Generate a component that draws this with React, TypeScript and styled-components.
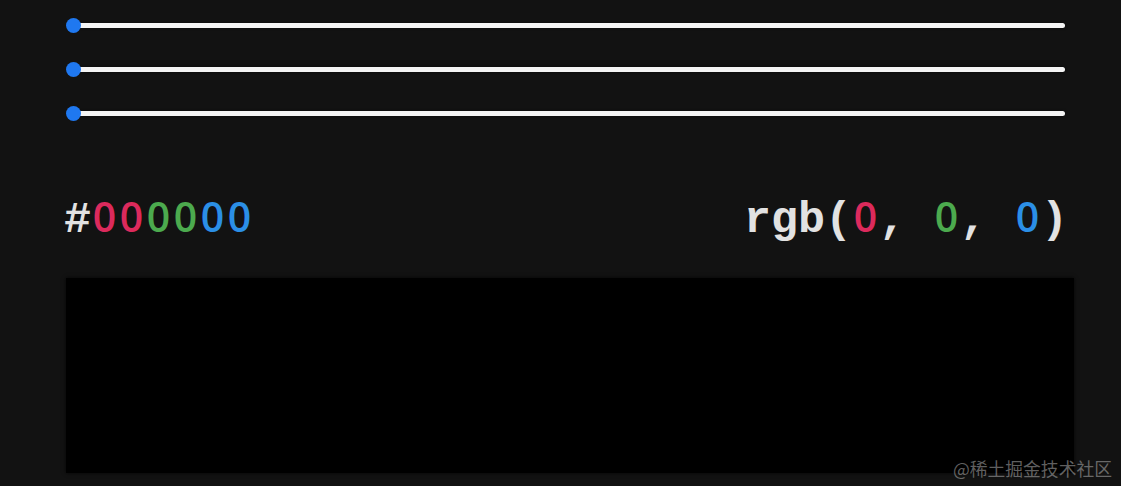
import React from "react";
import styled, { createGlobalStyle } from "styled-components";

const Global = createGlobalStyle`
  html, body { margin: 0; padding: 0; background: #121212; }
  body { font-family: "Liberation Mono", "DejaVu Sans Mono", monospace; }
`;

const Page = styled.div`
  width: 1121px;
  height: 486px;
  background: #121212;
  position: relative;
  overflow: hidden;
`;

const Panel = styled.div`
  margin-left: 66px;
  width: 1008px;
  display: flex;
  flex-direction: column;
`;

const Sliders = styled.div`
  display: flex;
  flex-direction: column;
  padding: 3px 9px 0 7px;
`;

const SliderRow = styled.div`
  height: 44px;
  display: flex;
  align-items: center;
  position: relative;
`;

const Track = styled.div`
  flex: 1;
  height: 5px;
  border-radius: 3px;
  background: #f4f4f4;
  box-shadow: 0 0 3px rgba(0, 0, 0, 0.6);
`;

const Thumb = styled.div`
  position: absolute;
  left: -7px;
  top: 50%;
  width: 15px;
  height: 15px;
  margin-top: -7.5px;
  border-radius: 50%;
  background: #1f78f0;
`;

const Values = styled.div`
  display: flex;
  justify-content: space-between;
  align-items: baseline;
  height: 60px;
  margin-top: 51px;
  padding: 0 6px 0 0;
  font-family: "Liberation Mono", monospace;
  font-weight: bold;
  font-size: 45px;
  line-height: 60px;
  color: #e2e2e2;
  margin-left: -2px;
`;

const Code = styled.span`
  white-space: pre;
`;

const Digit = styled.span<{ $c: string }>`
  display: inline-block;
  width: 27px;
  text-align: center;
  font-family: "Open Sans", "Liberation Sans", sans-serif;
  font-weight: 600;
  font-size: 41px;
  line-height: 60px;
  color: ${(p) => p.$c};
`;

const Swatch = styled.div`
  margin-top: 32px;
  height: 195px;
  background: #000;
  box-shadow: 0 0 4px rgba(0, 0, 0, 0.8);
`;

const Watermark = styled.div`
  position: absolute;
  right: 9px;
  bottom: 8px;
  font-family: "Noto Sans CJK SC", "Noto Sans", sans-serif;
  font-size: 17.8px;
  line-height: 20px;
  color: rgba(190, 190, 190, 0.5);
`;

const RED = "#dc2a5c";
const GREEN = "#4caa4e";
const BLUE = "#2b8fe6";

export default function App() {
  return (
    <>
      <Global />
      <Page>
        <Panel>
          <Sliders>
            {[0, 1, 2].map((i) => (
              <SliderRow key={i}>
                <Track />
                <Thumb />
              </SliderRow>
            ))}
          </Sliders>
          <Values>
            <Code>
              #<Digit $c={RED}>0</Digit>
              <Digit $c={RED}>0</Digit>
              <Digit $c={GREEN}>0</Digit>
              <Digit $c={GREEN}>0</Digit>
              <Digit $c={BLUE}>0</Digit>
              <Digit $c={BLUE}>0</Digit>
            </Code>
            <Code>
              {"rgb("}
              <Digit $c={RED}>0</Digit>
              {", "}
              <Digit $c={GREEN}>0</Digit>
              {", "}
              <Digit $c={BLUE}>0</Digit>
              {")"}
            </Code>
          </Values>
          <Swatch />
        </Panel>
        <Watermark>@稀土掘金技术社区</Watermark>
      </Page>
    </>
  );
}
